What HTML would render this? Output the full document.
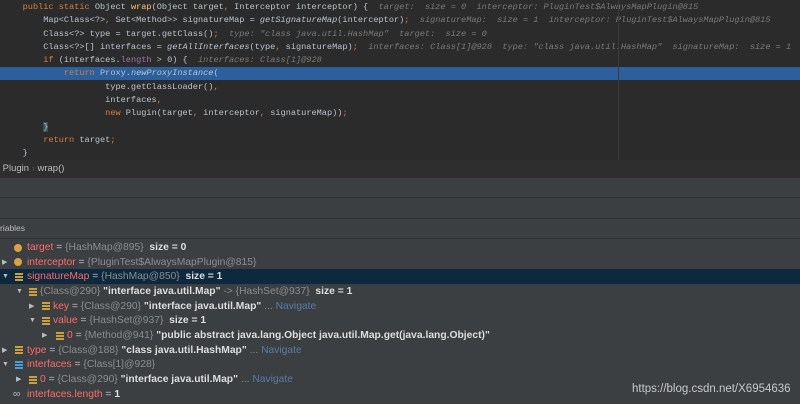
<!DOCTYPE html>
<html><head><meta charset="utf-8"><style>
body{margin:0;width:800px;height:404px;overflow:hidden;background:#3c3f41;font-family:"Liberation Sans",sans-serif;position:relative}
#code{position:absolute;left:0;top:0;width:800px;height:160px;background:#2b2b2b;font-family:"Liberation Mono",monospace;font-size:8.6px;color:#b8c4d0}
.l{position:absolute;left:2px;height:13px;line-height:13px;white-space:pre;width:798px}
.k{color:#d08040}.f{color:#ffc66d}.i{font-style:italic}.h{color:#7a7a7a;font-style:italic}.p{color:#9876aa}
.hl{background:#2d5f9c;left:0;padding-left:2px}
#vl{position:absolute;left:618px;top:0;width:1px;height:160px;background:#3a3a3a}
#bc{position:absolute;left:0;top:160px;width:800px;height:18px;background:#2e2e2e;color:#bbb;font-size:9.5px;line-height:18px}
.hr{position:absolute;left:0;width:800px;height:1px;background:#323232}
.r{position:absolute;left:0;height:14.7px;line-height:14.7px;width:800px;white-space:pre;font-size:10.3px;color:#bbb}
.r>span.t{position:absolute;top:1px}
.n{color:#ff6b68}.g{color:#8a8d8f}.b{font-weight:bold;color:#ddd}.nav{color:#5a7aa5}
.ic{position:absolute;width:8px;height:8px;top:3.5px}
.pp{border-radius:50%;background:#d9a343}
.eq{background:repeating-linear-gradient(#c9a13c 0 2px,transparent 2px 3px)}
.ar{position:absolute;color:#bbb;font-size:7px;top:1px}
</style></head><body>
<div id="code">
<div class="l" style="top:1px">    <span class="k">public static</span> Object <span class="f">wrap</span>(Object target<span class="k">,</span> Interceptor interceptor) {  <span class="h">target:  size = 0  interceptor: PluginTest$AlwaysMapPlugin@815</span></div>
<div class="l" style="top:14px">        Map&lt;Class&lt;?&gt;<span class="k">,</span> Set&lt;Method&gt;&gt; signatureMap = <span class="i">getSignatureMap</span>(interceptor)<span class="k">;</span>  <span class="h">signatureMap:  size = 1  interceptor: PluginTest$AlwaysMapPlugin@815</span></div>
<div class="l" style="top:27.5px">        Class&lt;?&gt; type = target.getClass()<span class="k">;</span>  <span class="h">type: "class java.util.HashMap"  target:  size = 0</span></div>
<div class="l" style="top:41px">        Class&lt;?&gt;[] interfaces = <span class="i">getAllInterfaces</span>(type<span class="k">,</span> signatureMap)<span class="k">;</span>  <span class="h">interfaces: Class[1]@928  type: "class java.util.HashMap"  signatureMap:  size = 1</span></div>
<div class="l" style="top:54px">        <span class="k">if</span> (interfaces.<span class="p">length</span> &gt; 0) {  <span class="h">interfaces: Class[1]@928</span></div>
<div class="l hl" style="top:67px">            <span class="k">return</span> Proxy.<span class="i">newProxyInstance</span>(</div>
<div class="l" style="top:80.5px">                    type.getClassLoader()<span class="k">,</span></div>
<div class="l" style="top:94px">                    interfaces<span class="k">,</span></div>
<div class="l" style="top:107px">                    <span class="k">new</span> Plugin(target<span class="k">,</span> interceptor<span class="k">,</span> signatureMap))<span class="k">;</span></div>
<div class="l" style="top:120.5px">        <span style="background:#3b514d">}</span></div>
<div class="l" style="top:134px">        <span class="k">return</span> target<span class="k">;</span></div>
<div class="l" style="top:147px">    }</div>
<div id="vl"></div>
</div>
<div id="bc">&nbsp;Plugin <span style="color:#555">›</span> wrap()</div>
<div class="hr" style="top:197px"></div>
<div class="hr" style="top:218px"></div>
<div style="position:absolute;top:219px;left:0;width:800px;height:19px;line-height:19px;font-size:8.5px;color:#bbb">riables</div>
<div class="hr" style="top:238px"></div>

<div class="r" style="top:240px"><span class="ic pp" style="left:14px"></span><span class="t" style="left:27px"><span class="n">target</span> = <span class="g">{HashMap@895}</span>  <span class="b">size = 0</span></span></div>
<div class="r" style="top:254.5px"><span class="ar" style="left:2px">▶</span><span class="ic pp" style="left:14px"></span><span class="t" style="left:27px"><span class="n">interceptor</span> = <span class="g">{PluginTest$AlwaysMapPlugin@815}</span></span></div>
<div class="r" style="top:269px;background:#0d293e"><span class="ar" style="left:2px">▼</span><span class="ic eq" style="left:15px"></span><span class="t" style="left:27px"><span class="n">signatureMap</span> = <span class="g">{HashMap@850}</span>  <span class="b">size = 1</span></span></div>
<div class="r" style="top:284px"><span class="ar" style="left:16px">▼</span><span class="ic eq" style="left:29px"></span><span class="t" style="left:40px"><span class="g">{Class@290}</span> <span class="b">"interface java.util.Map"</span> <span class="g">-&gt; {HashSet@937}</span>  <span class="b">size = 1</span></span></div>
<div class="r" style="top:298.5px"><span class="ar" style="left:29px">▶</span><span class="ic eq" style="left:42px"></span><span class="t" style="left:53px"><span class="n">key</span> = <span class="g">{Class@290}</span> <span class="b">"interface java.util.Map"</span> <span class="g">...</span> <span class="nav">Navigate</span></span></div>
<div class="r" style="top:313px"><span class="ar" style="left:29px">▼</span><span class="ic eq" style="left:42px"></span><span class="t" style="left:53px"><span class="n">value</span> = <span class="g">{HashSet@937}</span>  <span class="b">size = 1</span></span></div>
<div class="r" style="top:328px"><span class="ar" style="left:42px">▶</span><span class="ic eq" style="left:56px"></span><span class="t" style="left:67px"><span class="n">0</span> = <span class="g">{Method@941}</span> <span class="b">"public abstract java.lang.Object java.util.Map.get(java.lang.Object)"</span></span></div>
<div class="r" style="top:342.5px"><span class="ar" style="left:2px">▶</span><span class="ic eq" style="left:15px"></span><span class="t" style="left:27px"><span class="n">type</span> = <span class="g">{Class@188}</span> <span class="b">"class java.util.HashMap"</span> <span class="g">...</span> <span class="nav">Navigate</span></span></div>
<div class="r" style="top:357px"><span class="ar" style="left:2px">▼</span><span class="ic" style="left:15px;background:repeating-linear-gradient(#4a9ad8 0 2px,transparent 2px 3px)"></span><span class="t" style="left:27px"><span class="n">interfaces</span> = <span class="g">{Class[1]@928}</span></span></div>
<div class="r" style="top:372px"><span class="ar" style="left:16px">▶</span><span class="ic eq" style="left:29px"></span><span class="t" style="left:40px"><span class="n">0</span> = <span class="g">{Class@290}</span> <span class="b">"interface java.util.Map"</span> <span class="g">...</span> <span class="nav">Navigate</span></span></div>
<div class="r" style="top:386.5px"><span class="t" style="left:13px;color:#bbb">∞</span><span class="t" style="left:27px"><span class="n">interfaces.length</span> = <span class="b">1</span></span></div>
<div style="position:absolute;left:632px;top:383px;font-size:11.5px;color:#c8c8c8">https://blog.csdn.net/X6954636</div>
</body></html>
